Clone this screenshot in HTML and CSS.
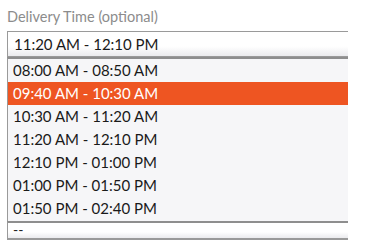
FILE: index.html
```html
<!DOCTYPE html>
<html lang="en">
<head>
    <meta charset="UTF-8">
    <title>Delivery Time</title>
    <link rel="stylesheet" href="styles.css">
</head>
<body>
    <div class="field">
        <label class="label">Delivery Time (optional)</label>
        <div class="select">11:20 AM - 12:10 PM</div>
        <ul class="options">
            <li>08:00 AM - 08:50 AM</li>
            <li class="active">09:40 AM - 10:30 AM</li>
            <li>10:30 AM - 11:20 AM</li>
            <li>11:20 AM - 12:10 PM</li>
            <li>12:10 PM - 01:00 PM</li>
            <li>01:00 PM - 01:50 PM</li>
            <li>01:50 PM - 02:40 PM</li>
        </ul>
        <div class="select small">--</div>
    </div>
</body>
</html>
```

FILE: styles.css
```css
body {
    margin: 0;
    padding: 7px 0 0 7px;
    font-family: Lato, "Liberation Sans", sans-serif;
    background-color: #ffffff;
}
.field {
    width: 341px;
}
.label {
    display: block;
    font-size: 14.5px;
    line-height: 20px;
    color: #8c8c8c;
    margin-bottom: 4px;
}
.select {
    box-sizing: border-box;
    height: 26px;
    padding: 2px 6px;
    font-size: 15px;
    line-height: 20px;
    color: #1a1a1a;
    border: 1px solid #9a9a9a;
    border-right: none;
    background: linear-gradient(#ffffff 60%, #ebebee);
}
.options {
    list-style: none;
    margin: 0;
    padding: 0 0 1px 0;
    background-color: #f6f6f8;
    border-top: 2px solid #8e8e8e;
    border-left: 1px solid #9a9a9a;
}
.options li {
    height: 23px;
    line-height: 23px;
    padding-left: 5px;
    font-size: 15px;
    color: #1a1a1a;
}
.options li.active {
    background-color: #ee5522;
    color: #ffffff;
}
.select.small {
    height: 19px;
    padding: 0 5px;
    line-height: 14px;
    font-size: 14px;
    border-top: 2px solid #8e8e8e;
    border-bottom: 2px solid #9a9a9a;
}
```
